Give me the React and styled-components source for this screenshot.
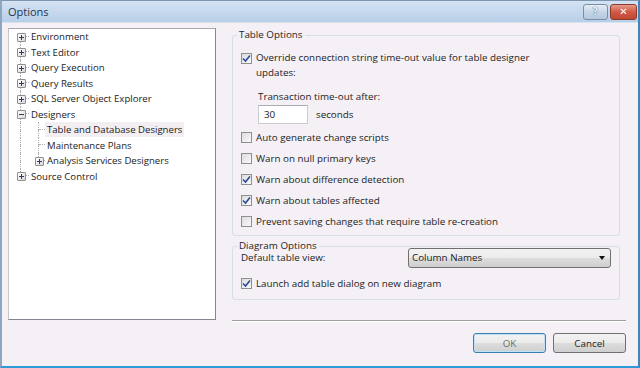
import React from 'react';
import styled, { createGlobalStyle } from 'styled-components';

const GlobalStyle = createGlobalStyle`
    html, body {
        margin: 0;
        padding: 0;
        background: #f5f0f5;
    }
    body {
        font-family: "Open Sans", "Noto Sans", sans-serif;
        font-size: 9.8px;
        color: #222;
    }
`;

const Window = styled.div`
    width: 640px;
    height: 368px;
    box-sizing: border-box;
    display: flex;
    flex-direction: column;
    background: #f5f0f5;
    border-left: 2px solid #8ea6bf;
    border-right: 2px solid #3f86bd;
    border-bottom: 2px solid #2e9ad6;
    border-top: 1px solid #7f95ad;
`;

const TitleBar = styled.div`
    height: 21px;
    display: flex;
    align-items: center;
    padding: 0 1px 0 6px;
    background: linear-gradient(#d4e3f3, #b8cee8);
    border-bottom: 1px solid #d9e4f0;
`;

const Title = styled.span`
    flex: 1;
    font-size: 11px;
    color: #1f3550;
`;

const CaptionButton = styled.button`
    width: ${p => p.w}px;
    height: 16px;
    margin-left: 2px;
    padding: 0;
    border-radius: 3px;
    border: 1px solid ${p => (p.danger ? '#8c3a2c' : '#7a8ea6')};
    background: ${p => (p.danger ? 'linear-gradient(#e89a8c, #cf5a45 50%, #c24632)' : 'linear-gradient(#e6eef7, #c5d5e8 50%, #b4c8df)')};
    color: #fff;
    font-family: "DejaVu Sans", sans-serif;
    font-weight: bold;
    font-size: 10px;
    line-height: 14px;
    display: flex;
    align-items: center;
    justify-content: center;
`;

const HelpGlyph = styled.span`
    color: #e9f0f8;
    text-shadow: 0 0 1px #58708c, 0 0 1px #58708c;
`;

const Body = styled.div`
    flex: 1;
    display: flex;
    padding: 5px 0 0 6px;
    gap: 16px;
`;

const TreePanel = styled.div`
    width: 208px;
    height: 292px;
    box-sizing: border-box;
    background: #fff;
    border: 1px solid #828790;
    border-left-color: #c6c6c6;
    border-top-color: #aaaaaa;
    padding: 0;
`;

const TreeRow = styled.div`
    height: 15.5px;
    display: flex;
    align-items: stretch;
    white-space: nowrap;
    font-size: 9.6px;
`;

const Gutter = styled.div`
    width: ${p => p.w}px;
    flex: none;
    display: grid;
    grid-template-columns: ${p => p.c}px 1fr;
    grid-template-rows: 1fr 1fr;
`;

const GuideCell = styled.span`
    grid-area: ${p => p.area};
    border-right: ${p => (p.on ? '1px dotted #b0b0b0' : 'none')};
    border-bottom: ${p => (p.flat ? '1px dotted #b0b0b0' : 'none')};
    margin-right: ${p => (p.flat ? 2 : 0)}px;
`;

const Expander = styled.span`
    grid-area: 1 / 1 / 3 / 2;
    justify-self: end;
    align-self: center;
    margin-right: -5px;
    margin-top: 1px;
    width: 7px;
    height: 7px;
    border: 1px solid #8e8f8f;
    border-radius: 1px;
    background: linear-gradient(135deg, #ffffff, #d8d8d8);
    display: flex;
    align-items: center;
    justify-content: center;
    z-index: 1;
`;

const TreeLabel = styled.span`
    align-self: center;
    padding: 1px 2px;
    margin-left: -2px;
    background: ${p => (p.selected ? '#f2eef2' : 'transparent')};
`;

const RightColumn = styled.div`
    width: 394px;
    display: flex;
    flex-direction: column;
`;

const Group = styled.fieldset`
    width: 388px;
    box-sizing: border-box;
    margin: ${p => p.mt}px 0 0 0;
    padding: 0 8px ${p => p.pb}px 8px;
    border: 1px solid #d5dfe5;
    border-radius: 3px;
    min-width: 0;
`;

const Legend = styled.legend`
    padding: 0 2px;
    margin-left: -4px;
    line-height: 14px;
`;

const CheckRow = styled.label`
    display: flex;
    align-items: ${p => (p.top ? 'flex-start' : 'center')};
    gap: 4px;
    height: ${p => p.h || 21}px;
    margin-top: ${p => p.mt || 0}px;
    line-height: 15px;
`;

const Box = styled.span`
    width: 11px;
    height: 11px;
    flex: none;
    box-sizing: border-box;
    border: 1px solid #8f8f8f;
    background: linear-gradient(135deg, #dcdcdc, #fafafa);
    display: flex;
    align-items: center;
    justify-content: center;
    margin-top: ${p => p.mt || 0}px;
`;

const Indent = styled.div`
    padding-left: 17px;
    margin-top: ${p => p.mt}px;
`;

const FieldRow = styled.div`
    display: flex;
    align-items: center;
    gap: 8px;
    margin-top: 2px;
    margin-bottom: 3px;
`;

const NumberInput = styled.div`
    width: 50px;
    height: 19px;
    box-sizing: border-box;
    border: 1px solid #c8cdd2;
    border-top-color: #abadb3;
    background: #fff;
    padding-left: 5px;
    line-height: 17px;
`;

const DropRow = styled.div`
    display: flex;
    align-items: center;
    justify-content: space-between;
    height: 21px;
    margin-top: -6px;
`;

const Select = styled.div`
    width: 203px;
    height: 20px;
    box-sizing: border-box;
    border: 1px solid #707070;
    border-radius: 3px;
    background: linear-gradient(#f3f3f3, #ebebeb 50%, #dddddd 51%, #cfcfcf);
    display: flex;
    align-items: center;
    justify-content: space-between;
    padding: 0 5px 0 3px;
`;

const Arrow = styled.span`
    width: 0;
    height: 0;
    border-left: 3.5px solid transparent;
    border-right: 3.5px solid transparent;
    border-top: 4px solid #111;
`;

const Separator = styled.div`
    height: 0;
    border-top: 1px solid #a0a0a0;
    border-bottom: 1px solid #ffffff;
    margin-top: 20px;
`;

const Buttons = styled.div`
    display: flex;
    justify-content: flex-end;
    gap: 7px;
    margin-top: 11px;
`;

const Button = styled.button`
    width: 73px;
    height: 20px;
    border-radius: 3px;
    border: 1px solid ${p => (p.primary ? '#3c7fb1' : '#707070')};
    box-shadow: ${p => (p.primary ? 'inset 0 0 0 1px #bfe2f7' : 'none')};
    background: linear-gradient(#f2f2f2, #ebebeb 50%, #dddddd 51%, #cfcfcf);
    font-family: inherit;
    font-size: 9.8px;
    color: ${p => (p.primary ? '#6d6d6d' : '#222')};
`;

function Check({ checked, mt }) {
    return (
        <Box mt={mt}>
            {checked && (
                <svg width="9" height="9" viewBox="0 0 9 9">
                    <path d="M1 4.5 L3.5 7 L8 1.5" stroke="#2a4a9a" strokeWidth="1.6" fill="none" />
                </svg>
            )}
        </Box>
    );
}

function Sign({ open }) {
    return (
        <svg width="5" height="5" viewBox="0 0 5 5">
            <path d="M0 2.5 H5" stroke="#2b3d66" strokeWidth="1" />
            {!open && <path d="M2.5 0 V5" stroke="#2b3d66" strokeWidth="1" />}
        </svg>
    );
}

// up/down: vertical guide above/below the centre, flat: connector to the label
function Guide({ w, c, up, down, flat, box, open }) {
    return (
        <Gutter w={w} c={c}>
            <GuideCell area="1 / 1" on={up} />
            <GuideCell area="2 / 1" on={down} />
            <GuideCell area="1 / 2" flat={flat} />
            {box && (
                <Expander>
                    <Sign open={open} />
                </Expander>
            )}
        </Gutter>
    );
}

const tree = [
    { label: 'Environment', first: true },
    { label: 'Text Editor' },
    { label: 'Query Execution' },
    { label: 'Query Results' },
    { label: 'SQL Server Object Explorer' },
    { label: 'Designers', open: true },
    { label: 'Table and Database Designers', child: true, selected: true },
    { label: 'Maintenance Plans', child: true },
    { label: 'Analysis Services Designers', child: true, last: true, box: true },
    { label: 'Source Control', last: true },
];

const tableOptions = [
    { label: 'Auto generate change scripts', checked: false },
    { label: 'Warn on null primary keys', checked: false },
    { label: 'Warn about difference detection', checked: true },
    { label: 'Warn about tables affected', checked: true },
    { label: 'Prevent saving changes that require table re-creation', checked: false },
];

export default function App() {
    return (
        <>
            <GlobalStyle />
            <Window>
                <TitleBar>
                    <Title>Options</Title>
                    <CaptionButton w={25}><HelpGlyph>?</HelpGlyph></CaptionButton>
                    <CaptionButton w={27} danger>✕</CaptionButton>
                </TitleBar>

                <Body>
                    <TreePanel>
                        {tree.map(item => (
                            <TreeRow key={item.label}>
                                <Guide
                                    w={22}
                                    c={12}
                                    up={!item.first}
                                    down={!item.last || item.child}
                                    flat={!item.child}
                                    box={!item.child}
                                    open={item.open}
                                />
                                {item.child && (
                                    <Guide w={16} c={8} up down={!item.last} flat box={item.box} />
                                )}
                                <TreeLabel selected={item.selected}>{item.label}</TreeLabel>
                            </TreeRow>
                        ))}
                    </TreePanel>

                    <RightColumn>
                        <Group mt={0} pb={3}>
                            <Legend>Table Options</Legend>
                            <CheckRow top h={35} mt={8}>
                                <Check checked mt={3} />
                                <span>
                                    Override connection string time-out value for table designer
                                    <br />
                                    updates:
                                </span>
                            </CheckRow>
                            <Indent mt={5}>
                                <div>Transaction time-out after:</div>
                                <FieldRow>
                                    <NumberInput>30</NumberInput>
                                    <span>seconds</span>
                                </FieldRow>
                            </Indent>
                            {tableOptions.map(o => (
                                <CheckRow key={o.label}>
                                    <Check checked={o.checked} />
                                    <span>{o.label}</span>
                                </CheckRow>
                            ))}
                        </Group>

                        <Group mt={3} pb={5}>
                            <Legend>Diagram Options</Legend>
                            <DropRow>
                                <span>Default table view:</span>
                                <Select>
                                    <span>Column Names</span>
                                    <Arrow />
                                </Select>
                            </DropRow>
                            <CheckRow h={22} mt={4}>
                                <Check checked />
                                <span>Launch add table dialog on new diagram</span>
                            </CheckRow>
                        </Group>

                        <Separator />
                        <Buttons>
                            <Button primary>OK</Button>
                            <Button>Cancel</Button>
                        </Buttons>
                    </RightColumn>
                </Body>
            </Window>
        </>
    );
}
